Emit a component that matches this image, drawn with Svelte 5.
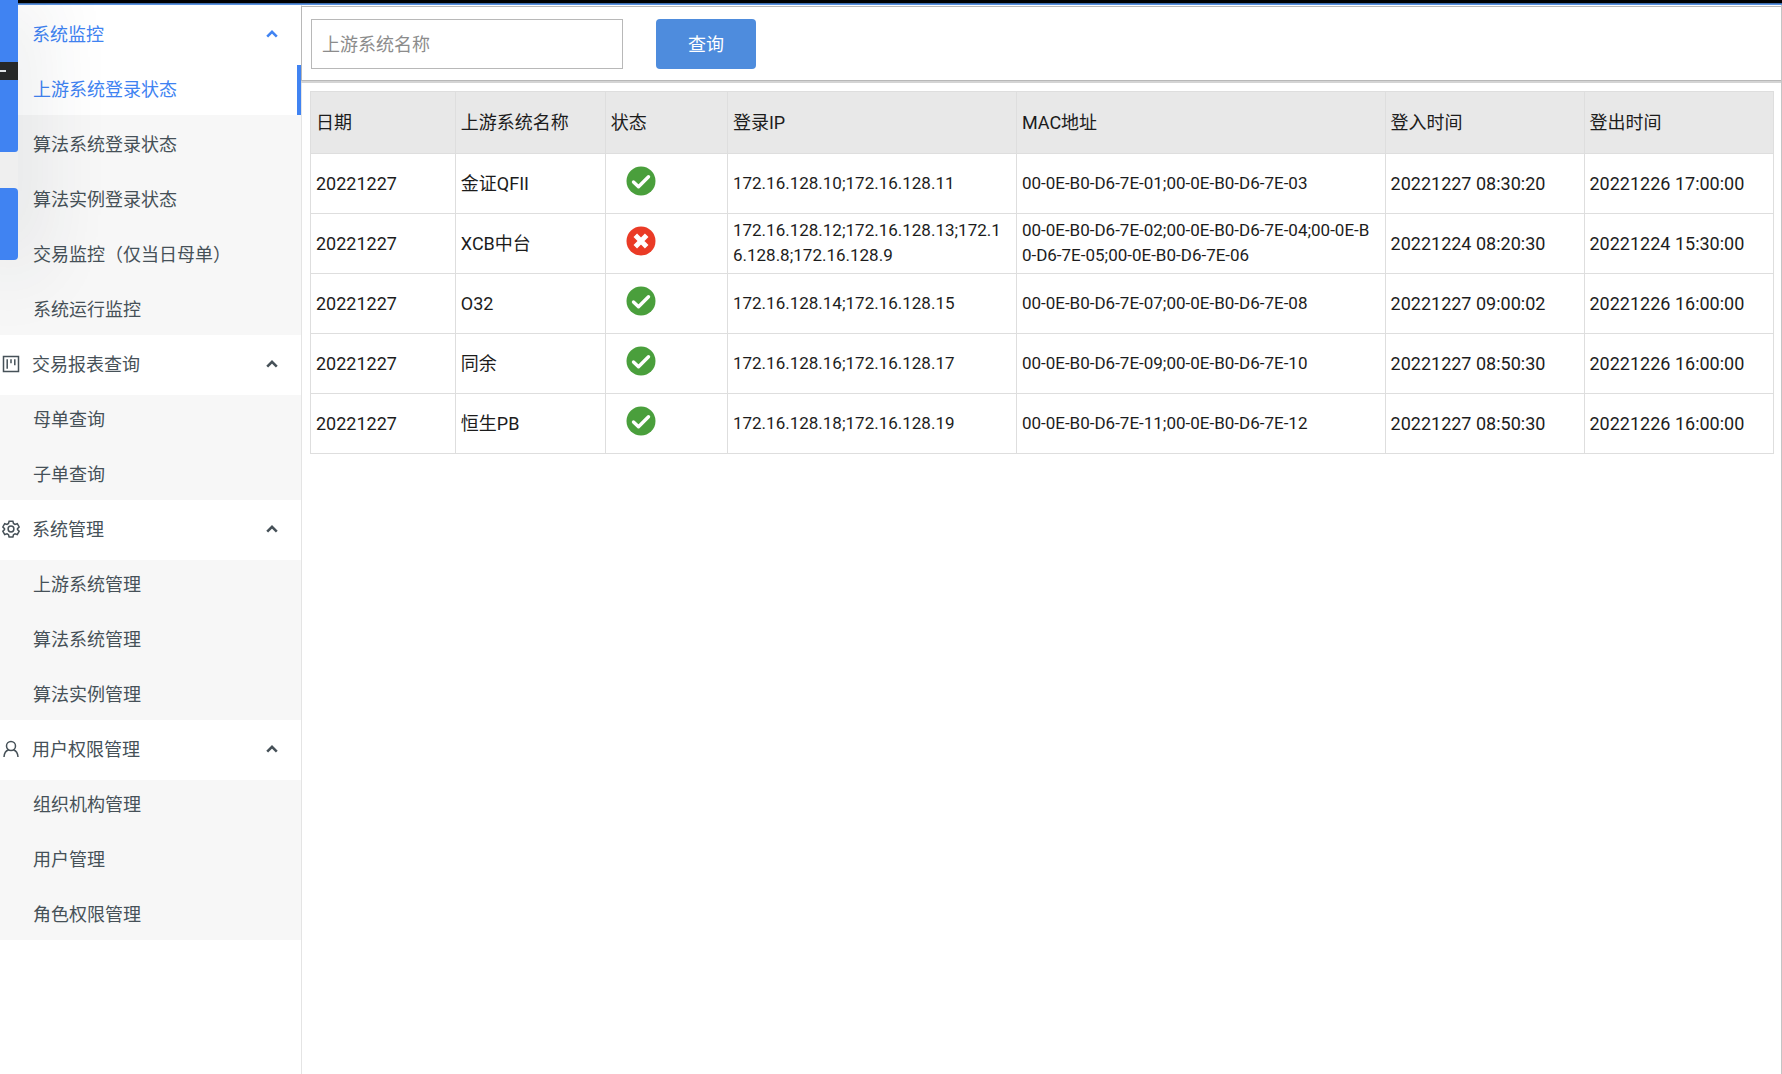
<script>
  const groups = [
    {
      title: '系统监控', icon: '', active: true,
      items: ['上游系统登录状态', '算法系统登录状态', '算法实例登录状态', '交易监控（仅当日母单）', '系统运行监控']
    },
    { title: '交易报表查询', icon: 'board', items: ['母单查询', '子单查询'] },
    { title: '系统管理', icon: 'gear', items: ['上游系统管理', '算法系统管理', '算法实例管理'] },
    { title: '用户权限管理', icon: 'user', items: ['组织机构管理', '用户管理', '角色权限管理'] }
  ];

  let current = $state('上游系统登录状态');
  let keyword = $state('');
  let closed = $state({});

  const columns = ['日期', '上游系统名称', '状态', '登录IP', 'MAC地址', '登入时间', '登出时间'];
  const rows = [
    { date: '20221227', name: '金证QFII', ok: true, ip: '172.16.128.10;172.16.128.11', mac: '00-0E-B0-D6-7E-01;00-0E-B0-D6-7E-03', login: '20221227 08:30:20', logout: '20221226 17:00:00' },
    { date: '20221227', name: 'XCB中台', ok: false, ip: '172.16.128.12;172.16.128.13;172.1\n6.128.8;172.16.128.9', mac: '00-0E-B0-D6-7E-02;00-0E-B0-D6-7E-04;00-0E-B\n0-D6-7E-05;00-0E-B0-D6-7E-06', login: '20221224 08:20:30', logout: '20221224 15:30:00' },
    { date: '20221227', name: 'O32', ok: true, ip: '172.16.128.14;172.16.128.15', mac: '00-0E-B0-D6-7E-07;00-0E-B0-D6-7E-08', login: '20221227 09:00:02', logout: '20221226 16:00:00' },
    { date: '20221227', name: '同余', ok: true, ip: '172.16.128.16;172.16.128.17', mac: '00-0E-B0-D6-7E-09;00-0E-B0-D6-7E-10', login: '20221227 08:50:30', logout: '20221226 16:00:00' },
    { date: '20221227', name: '恒生PB', ok: true, ip: '172.16.128.18;172.16.128.19', mac: '00-0E-B0-D6-7E-11;00-0E-B0-D6-7E-12', login: '20221227 08:50:30', logout: '20221226 16:00:00' }
  ];
</script>

<div class="page">
  <div class="topbar"></div>
  <div class="rail" aria-hidden="true">
    <div class="rail-main"><span class="rail-tool"><i></i></span></div>
    <div class="rail-card"></div>
  </div>

  <div class="body">
    <nav class="sidebar">
      {#each groups as group}
        <section>
          <button
            class="group"
            class:active={group.active}
            aria-expanded={!closed[group.title]}
            onclick={() => (closed[group.title] = !closed[group.title])}
          >
            <span class="icon">
              {#if group.icon === 'board'}
                <svg viewBox="0 0 18 18"><rect x="1.5" y="1.5" width="15" height="15" /><path d="M5.2 4.2v9.6M9 4.2v4M12.8 4.2v6" /></svg>
              {:else if group.icon === 'gear'}
                <svg viewBox="0 0 18 18"><path d="M7.1 1.2h3.8l.6 2.3 1.5.9 2.3-.7 1.9 3.3-1.7 1.6v1l1.7 1.6-1.9 3.3-2.3-.7-1.5.9-.6 2.3H7.1l-.6-2.3-1.5-.9-2.3.7L.8 11.2l1.7-1.6v-1L.8 7l1.900-3.300 2.300.7 1.500-.9z" /><circle cx="9" cy="9" r="2.900" /></svg>
              {:else if group.icon === 'user'}
                <svg viewBox="0 0 18 18"><circle cx="9" cy="6" r="4.500" /><path d="M2 17c.2-3.900 2-6.300 4.700-7.200M16 17c-.2-3.900-2-6.300-4.700-7.200" /></svg>
              {/if}
            </span>
            <span class="label">{group.title}</span>
            <svg class="chevron" viewBox="0 0 12 8"><path d="M1.200 6.600 6 1.900l4.800 4.700" /></svg>
          </button>
          {#if !closed[group.title]}
            <ul>
              {#each group.items as item}
                <li>
                  <a href="#{item}" class:current={current === item} onclick={() => (current = item)}>{item}</a>
                </li>
              {/each}
            </ul>
          {/if}
        </section>
      {/each}
    </nav>

    <main>
      <form class="filter" onsubmit={(e) => e.preventDefault()}>
        <input type="text" aria-label="上游系统名称" placeholder="上游系统名称" bind:value={keyword} />
        <button type="submit">查询</button>
      </form>

      <div class="table-wrap">
        <table>
          <colgroup>
            <col class="c-date" /><col class="c-name" /><col class="c-state" /><col class="c-ip" />
            <col class="c-mac" /><col class="c-in" /><col class="c-out" />
          </colgroup>
          <thead>
            <tr>{#each columns as column}<th scope="col">{column}</th>{/each}</tr>
          </thead>
          <tbody>
            {#each rows as row}
              <tr>
                <td>{row.date}</td>
                <td>{row.name}</td>
                <td class="state">
                  {#if row.ok}
                    <svg viewBox="0 0 30 30" role="img" aria-label="正常"><circle cx="15" cy="15" r="14.500" fill="#4a9f3c" /><path d="M7.500 16l5 4.800 10-10" /></svg>
                  {:else}
                    <svg viewBox="0 0 30 30" role="img" aria-label="异常"><circle cx="15" cy="15" r="14.500" fill="#ea3b26" /><path class="cross" d="M9.300 9.300l11.400 11.400M20.700 9.300 9.300 20.700" /></svg>
                  {/if}
                </td>
                <td class="address">{row.ip}</td>
                <td class="address">{row.mac}</td>
                <td>{row.login}</td>
                <td>{row.logout}</td>
              </tr>
            {/each}
          </tbody>
        </table>
      </div>
    </main>
  </div>
</div>

<style>
  :global(body) {
    background: #fff;
  }
  .page {
    position: relative;
    display: flex;
    flex-direction: column;
    min-height: 100vh;
    overflow: hidden;
    font-family: Roboto, 'Noto Sans CJK SC', sans-serif;
    font-size: 18px;
    line-height: 25px;
    color: #1c1c1c;
  }
  .topbar {
    height: 4px;
    box-sizing: border-box;
    background: #000;
    border-bottom: 1px solid #3f6fb0;
    box-shadow: 0 1px 0 #5b93e0;
    margin-bottom: 1px;
  }
  .body {
    flex: 1;
    display: flex;
  }

  .rail {
    position: absolute;
    top: 0;
    left: 0;
    width: 18px;
    background: rgba(40, 50, 60, 0.04);
    box-shadow: 0 0 80px 8px rgba(40, 50, 60, 0.16);
  }
  .rail-main {
    height: 152px;
    background: #4083f2;
    border-bottom-right-radius: 3px;
  }
  .rail-tool {
    position: absolute;
    top: 62px;
    left: 0;
    width: 18px;
    height: 18px;
    display: flex;
    align-items: center;
    background: #262828;
  }
  .rail-tool i {
    width: 6px;
    height: 2px;
    background: #dfe3e6;
  }
  .rail-card {
    height: 72px;
    margin-top: 36px;
    background: #4083f2;
    border-radius: 0 4px 4px 0;
  }

  .sidebar {
    flex: none;
    width: 301px;
    border-right: 1px solid #e4e4e4;
  }
  .group {
    display: flex;
    align-items: center;
    width: 100%;
    height: 60px;
    padding: 0 23px 2px 2px;
    border: 0;
    background: none;
    font: inherit;
    color: #465158;
    text-align: left;
    cursor: pointer;
  }
  .group.active {
    color: #4083f2;
  }
  .icon {
    width: 30px;
    height: 18px;
  }
  .icon svg {
    display: block;
    width: 18px;
    height: 18px;
    fill: none;
    stroke: currentColor;
    stroke-width: 1.5;
  }
  .label {
    flex: 1;
  }
  .chevron {
    width: 12px;
    height: 8px;
    fill: none;
    stroke: currentColor;
    stroke-width: 2.600;
  }
  ul {
    display: flex;
    flex-direction: column;
    gap: 5px;
    margin: 0;
    padding: 0;
    list-style: none;
    background: #f7f7f7;
  }
  li a {
    box-sizing: border-box;
    display: flex;
    align-items: center;
    height: 50px;
    padding: 0 0 2px 33px;
    color: #465158;
    text-decoration: none;
  }
  li a.current {
    background: #fff;
    color: #4083f2;
    border-right: 4px solid #4083f2;
  }

  main {
    flex: 1;
    min-width: 0;
    border-right: 1px solid #c4c4c4;
  }
  .filter {
    display: flex;
    gap: 33px;
    margin-top: 1px;
    margin-left: -1px;
    padding: 12px 8px 11px 9px;
    border: 1px solid #b8b8b8;
    border-right: 0;
    box-shadow: 0 2px 0 #d4d4d4;
  }
  .filter input {
    box-sizing: border-box;
    width: 312px;
    height: 50px;
    padding: 0 10px;
    border: 1px solid #b8b8b8;
    border-radius: 0;
    font: inherit;
    color: #1c1c1c;
  }
  .filter input::placeholder {
    color: #8c8c8c;
    opacity: 1;
  }
  .filter button {
    width: 100px;
    height: 50px;
    border: 0;
    border-radius: 4px;
    background: #4e8cdd;
    color: #fff;
    font: inherit;
    cursor: pointer;
  }

  .table-wrap {
    padding: 10px 7px 0 8px;
  }
  table {
    width: 100%;
    table-layout: fixed;
    border-collapse: collapse;
  }
  .c-date { width: 9.9%; }
  .c-name { width: 10.25%; }
  .c-state { width: 8.35%; }
  .c-ip { width: 19.75%; }
  .c-mac { width: 25.2%; }
  .c-in { width: 13.6%; }
  .c-out { width: 12.95%; }
  th,
  td {
    box-sizing: border-box;
    height: 60px;
    padding: 0 0 1px 5px;
    border: 1px solid #dedede;
    font-weight: 400;
    text-align: left;
    vertical-align: middle;
    word-break: break-all;
  }
  th {
    height: 62px;
    padding-bottom: 0;
    background: #e8e8e8;
  }
  .address {
    font-size: 17px;
    white-space: pre-line;
  }
  .state {
    padding: 0 0 6px 20px;
  }
  .state svg {
    display: block;
    width: 30px;
    height: 30px;
    fill: none;
    stroke: #fff;
    stroke-width: 0;
  }
  .state path {
    stroke-width: 3.400;
    stroke-linecap: round;
    stroke-linejoin: round;
  }
  .state .cross {
    stroke-width: 5;
    stroke-linecap: butt;
  }
</style>
